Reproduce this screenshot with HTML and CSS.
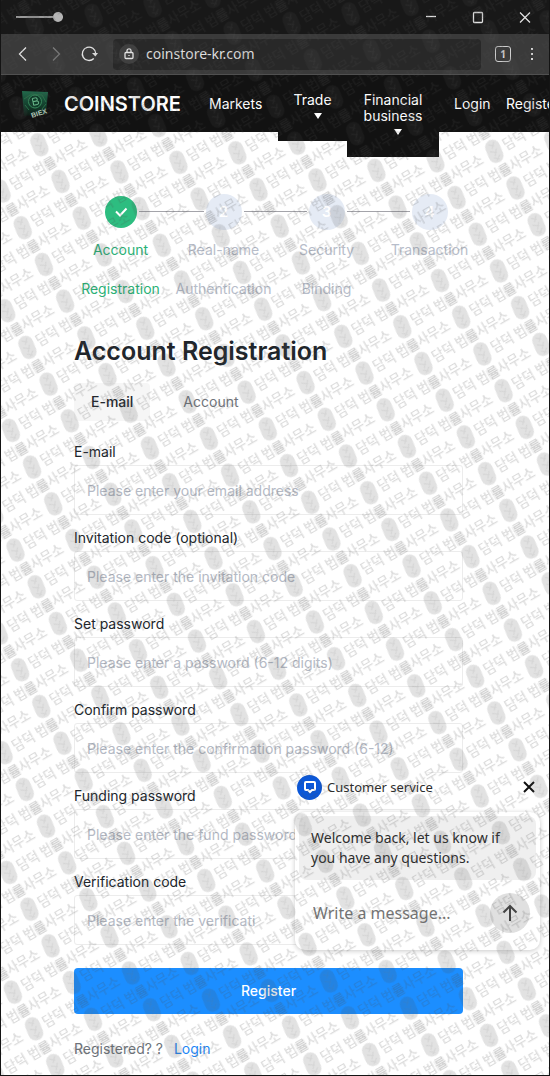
FILE: index.html
```html
<!DOCTYPE html>
<html lang="en">
<head>
<meta charset="utf-8">
<meta name="viewport" content="width=device-width, initial-scale=1">
<title>Account Registration</title>
<link rel="stylesheet" href="styles.css">
</head>
<body>
<div class="window">
  <div class="titlebar">
    <input class="opacity" type="range" min="0" max="100" value="100" aria-label="Window opacity">
    <div class="window-buttons">
      <button type="button" aria-label="Minimize"><svg width="14" height="14" viewBox="0 0 14 14"><path d="M2 6.500h10"/></svg></button>
      <button type="button" aria-label="Maximize"><svg width="14" height="14" viewBox="0 0 14 14"><rect x="2.500" y="2.500" width="9" height="10" rx="1"/></svg></button>
      <button type="button" aria-label="Close"><svg width="14" height="14" viewBox="0 0 14 14"><path d="M2 2.500l10 10M12 2.500l-10 10"/></svg></button>
    </div>
  </div>
  <div class="toolbar">
    <button type="button" aria-label="Back"><svg width="18" height="18" viewBox="0 0 18 18"><path d="M12 2.500L5.500 9l6.500 6.500"/></svg></button>
    <button type="button" class="dim" aria-label="Forward"><svg width="18" height="18" viewBox="0 0 18 18"><path d="M6 2.500L12.500 9L6 15.500"/></svg></button>
    <button type="button" aria-label="Reload"><svg width="18" height="18" viewBox="0 0 18 18"><path d="M13.800 13.500A6.700 6.700 0 1 1 15.700 8.500"/><path class="solid" d="M12 8h6l-2.600 3.600z"/></svg></button>
    <div class="address">
      <span class="lock"><svg width="12" height="14" viewBox="0 0 12 14"><rect x="2" y="5.500" width="8" height="6" rx="1"/><path d="M4 5.500V3.800a2 2 0 0 1 4 0V5.500M6 8v1"/></svg></span>
      <input type="text" value="coinstore-kr.com" aria-label="Address">
    </div>
    <button type="button" class="tabs" aria-label="Open tabs"><span>1</span></button>
    <button type="button" class="menu" aria-label="Menu"><svg width="6" height="16" viewBox="0 0 6 16"><path class="solid" d="M2 2h2v2H2zM2 7h2v2H2zM2 12h2v2H2z"/></svg></button>
  </div>

  <header class="site-header">
    <svg class="logo" width="28" height="28" viewBox="0 0 28 28">
      <defs><linearGradient id="lg" x1="0" y1="0" x2="0" y2="1"><stop offset="0" stop-color="#22694b"/><stop offset=".6" stop-color="#123d2b"/><stop offset="1" stop-color="#0f1a15"/></linearGradient></defs>
      <path d="M1 1l26 1-2 22-22 2z" fill="url(#lg)"/>
      <path d="M3 9l8-5 10 1 4 7M4 15l4 5M25 14l-4 5" fill="none" stroke="#2a7049"/>
      <circle cx="14" cy="11.500" r="6.500" fill="#0f3b29" stroke="#388a5c"/>
      <path d="M12 8v7M12 8h3a1.600 1.600 0 0 1 0 3.300h-3M12 11.300h3.500a1.800 1.800 0 0 1 0 3.700H12" fill="none" stroke="#6cc491" transform="rotate(-12 14 11.500)"/>
      <text x="11" y="28" transform="rotate(-18 11 28)" class="logo-text">BIEX</text>
    </svg>
    <strong class="brand">COINSTORE</strong>
    <nav class="nav">
      <a class="markets" href="#">Markets</a>
      <a class="drop" href="#">Trade<svg width="8" height="6" viewBox="0 0 8 6"><path d="M0 0h8L4 6z"/></svg></a>
      <a class="drop wide" href="#">Financial business<svg width="8" height="6" viewBox="0 0 8 6"><path d="M0 0h8L4 6z"/></svg></a>
      <a class="login" href="#">Login</a>
      <a class="register" href="#">Register</a>
    </nav>
  </header>

  <ol class="steps">
    <li class="done"><div class="track"><span class="dot"><svg width="16" height="12" viewBox="0 0 16 12"><path d="M3 5.500l4 4 6.500-7"/></svg></span></div>Account Registration</li>
    <li><div class="track"><span class="dot">2</span></div>Real-name Authentication</li>
    <li><div class="track"><span class="dot">3</span></div>Security Binding</li>
    <li><div class="track"><span class="dot">4</span></div>Transaction</li>
  </ol>

  <main class="content">
    <h1>Account Registration</h1>
    <div class="switch">
      <button type="button" class="active">E-mail</button>
      <button type="button">Account</button>
    </div>
    <form class="form">
      <div class="field"><label for="email">E-mail</label><input id="email" type="text" placeholder="Please enter your email address"></div>
      <div class="field"><label for="invite">Invitation code (optional)</label><input id="invite" type="text" placeholder="Please enter the invitation code"></div>
      <div class="field"><label for="pass">Set password</label><input id="pass" type="password" placeholder="Please enter a password (6-12 digits)"></div>
      <div class="field"><label for="confirm">Confirm password</label><input id="confirm" type="password" placeholder="Please enter the confirmation password (6-12)"></div>
      <div class="field"><label for="fund">Funding password</label><input id="fund" type="password" placeholder="Please enter the fund password"></div>
      <div class="field"><label for="code">Verification code</label><input id="code" type="text" placeholder="Please enter the verificati"></div>
      <button type="button" class="submit">Register</button>
    </form>
    <p class="foot">Registered? ? <a href="#">Login</a></p>
  </main>

  <aside class="chat">
    <div class="chat-head">
      <div class="chat-title">
        <span class="chat-icon"><svg width="14" height="14" viewBox="0 0 14 14"><path d="M3 2h8a1 1 0 0 1 1 1v6a1 1 0 0 1-1 1H9l-2 2-2-2H3a1 1 0 0 1-1-1V3a1 1 0 0 1 1-1z"/></svg></span>
        <span>Customer service</span>
      </div>
      <button type="button" class="chat-close" aria-label="Close chat"><svg width="12" height="12" viewBox="0 0 12 12"><path d="M1 1l10 10M11 1L1 11"/></svg></button>
    </div>
    <div class="chat-card">
      <p class="bubble">Welcome back, let us know if you have any questions.</p>
      <div class="compose">
        <input type="text" placeholder="Write a message..." aria-label="Write a message">
        <button type="button" class="send" aria-label="Send"><svg width="18" height="20" viewBox="0 0 18 20"><path d="M9 18V3M2.500 9.500L9 3l6.500 6.500"/></svg></button>
      </div>
    </div>
  </aside>

  <svg class="watermark" aria-hidden="true">
    <defs>
      <g id="mark">
        <g transform="rotate(8)">
          <rect class="seal" x="-7.500" y="-12" width="15" height="24" rx="7.500"/>
          <path class="grain" d="M-3 -8l5 3M3 -9l-4 6M-4 -1l6 3M3 -2l-4 7M-3 6l5 3M4 5l-5 5"/>
        </g>
        <text x="11" y="5">담덕 법률사무소</text>
        <rect class="block" x="50" y="-5" width="11" height="11"/>
      </g>
      <pattern id="marks-a" patternUnits="userSpaceOnUse" width="111.650" height="42.390" patternTransform="translate(38.300 144.700) rotate(-30) translate(-10 -21)">
        <use href="#mark" x="10" y="21"/>
      </pattern>
      <pattern id="marks-b" patternUnits="userSpaceOnUse" width="111.650" height="42.390" patternTransform="translate(38.300 144.700) rotate(-30) translate(45.800 0.200)">
        <use href="#mark" x="10" y="21"/>
      </pattern>
    </defs>
    <rect width="100%" height="100%" fill="url(#marks-a)"/>
    <rect width="100%" height="100%" fill="url(#marks-b)"/>
  </svg>
</div>
</body>
</html>
```
FILE: styles.css
```css
* { box-sizing: border-box; }
body { margin: 0; background: #fff; color: #20252b; font: 14px/20px Inter, "Noto Sans", sans-serif; }
button, input { font: inherit; color: inherit; margin: 0; padding: 0; border: 0; background: none; outline: 0; }
a { color: inherit; text-decoration: none; }
svg { flex: none; }

.window { position: relative; min-height: 100vh; overflow: hidden; border: 1px solid #141414; border-top: 0; }

.titlebar { display: flex; align-items: center; justify-content: space-between; height: 34px; padding: 0 10px 0 15px; background: #181818; }
.opacity { appearance: none; width: 47px; height: 14px; }
.opacity::-webkit-slider-runnable-track { height: 2px; background: #999; }
.opacity::-webkit-slider-thumb { appearance: none; width: 10px; height: 10px; margin-top: -4px; border-radius: 50%; background: #b4b4b4; }
.window-buttons { display: flex; gap: 19px; }
.window-buttons button { display: flex; justify-content: center; width: 28px; }
.window-buttons svg, .toolbar svg { fill: none; stroke: #e2e2e2; stroke-width: 1.3; }

.toolbar { display: flex; align-items: center; height: 41px; padding: 0 9px 0 13px; background: #3a3a3a; border-bottom: 1px solid #505050; }
.toolbar > button { display: flex; margin-right: 15px; }
.toolbar .dim { opacity: .4; }
.toolbar .solid { fill: #d8d8d8; stroke: none; }
.address { display: flex; flex: 1; align-items: center; gap: 7px; height: 31px; padding: 0 6px; border-radius: 4px; background: #282828; }
.address input { flex: 1; min-width: 0; color: #dedede; font: 14px/20px "Noto Sans", sans-serif; }
.lock { display: flex; align-items: center; justify-content: center; width: 20px; height: 20px; border-radius: 50%; background: #404040; }
.toolbar > .tabs { justify-content: center; width: 16px; height: 16px; margin: 0 18px 0 14px; border: 1px solid #d0d0d0; border-radius: 3px; color: #d8d8d8; font: 700 10px/14px "Noto Sans", sans-serif; }
.toolbar > .menu { margin: 0 5px 0 0; }

.site-header { display: flex; align-items: center; height: 57px; padding-left: 20px; background: #121212; color: #fff; }
.logo { margin-right: 15px; }
.logo-text { fill: #b3c9bc; font: 700 7px "Liberation Sans", sans-serif; }
.brand { width: 145px; font-size: 20px; font-weight: 600; }
.nav { display: flex; flex: 1; align-items: flex-start; align-self: stretch; min-width: 0; white-space: nowrap; line-height: 16px; }
.nav a { flex: none; padding-top: 21px; }
.nav .markets { width: 69px; }
.nav .drop { display: flex; flex-direction: column; align-items: center; gap: 5px; width: 69px; padding: 17px 15px 22px; background: #121212; text-align: center; white-space: normal; }
.nav .wide { width: 92px; }
.nav .drop svg { margin-left: 10px; fill: #fff; }
.nav .login { width: 52px; margin-left: 15px; }

.steps { display: grid; grid-template-columns: repeat(4, 1fr); margin: 0; padding: 61px 68px 0; list-style: none; text-align: center; color: #b7bdca; line-height: 39px; }
.steps li { min-width: 0; }
.track { display: flex; align-items: center; justify-content: center; gap: 2px; height: 37px; }
.track::before, .track::after { content: ""; flex: 1; height: 1px; background: #a4a4aa; }
.steps li:first-child .track::before, .steps li:last-child .track::after { visibility: hidden; }
.dot { display: flex; align-items: center; justify-content: center; width: 36px; height: 36px; border-radius: 50%; background: #e5ebf5; color: #fff; font-size: 15px; font-weight: 600; }
.done { color: #2bb176; }
.done .dot { width: 32px; height: 32px; background: #2dbd80; }
.dot svg { fill: none; stroke: #fff; stroke-width: 2; }

.content { padding: 25px 86px 0 73px; }
h1 { margin: 0; font-size: 25px; line-height: 36px; font-weight: 600; }
.switch { display: flex; gap: 16px; margin-top: 14px; }
.switch button { height: 38px; padding: 0 17px; border-radius: 4px; color: #70757c; }
.switch .active { background: #f6f6f6; color: #24282e; font-weight: 500; }
.form { display: flex; flex-direction: column; margin-top: 18px; }
.field { display: flex; flex-direction: column; margin-bottom: 10px; }
.field label { line-height: 26px; }
.field input { height: 50px; padding: 0 12px; border: 1px solid #ececec; border-radius: 3px; }
.field input::placeholder { color: #b5bac5; opacity: 1; }
.submit { height: 46px; margin-top: 13px; border-radius: 4px; background: #1c8eff; color: #fff; font-weight: 500; }
.foot { margin: 0; padding: 25px 0 16px; color: #6d737a; }
.foot a { margin-left: 7px; color: #1f87f5; }

.chat { position: absolute; right: 9px; bottom: 125px; width: 245px; color: #2d2d2d; font: 14px/20px "Noto Sans", sans-serif; }
.chat-head { display: flex; align-items: center; justify-content: space-between; height: 30px; margin-bottom: 10px; }
.chat-title { display: flex; align-items: center; gap: 5px; height: 30px; padding: 0 6px 0 2px; border-radius: 15px; background: #fff; font-size: 13px; }
.chat-icon { display: flex; align-items: center; justify-content: center; width: 25px; height: 25px; border-radius: 50%; background: #0b57d8; }
.chat-icon svg { fill: none; stroke: #fff; stroke-width: 2; }
.chat-close { display: flex; padding: 5px; }
.chat-close svg { fill: none; stroke: #111; stroke-width: 2; }
.chat-card { padding: 4px; border-radius: 10px; background: #fff; box-shadow: 0 1px 5px rgba(0, 0, 0, .22); }
.bubble { margin: 0; padding: 12px; border-radius: 8px; background: #efefef; }
.compose { display: flex; align-items: center; height: 66px; padding: 0 6px 0 14px; }
.compose input { flex: 1; min-width: 0; font-size: 16px; }
.compose input::placeholder { color: #757575; opacity: 1; }
.send { display: flex; align-items: center; justify-content: center; width: 40px; height: 40px; border-radius: 50%; background: #e0e0e0; }
.send svg { fill: none; stroke: #444; stroke-width: 2; }

.watermark { position: absolute; top: 0; left: 0; width: 100%; height: 100%; pointer-events: none; fill: rgba(75, 75, 75, .2); font: 500 13px "Noto Sans CJK KR", sans-serif; }
.watermark .seal { fill: rgba(75, 75, 75, .16); }
.watermark .grain { fill: none; stroke: rgba(110, 110, 110, .12); }
.watermark .block { fill: rgba(75, 75, 75, .08); }
```
